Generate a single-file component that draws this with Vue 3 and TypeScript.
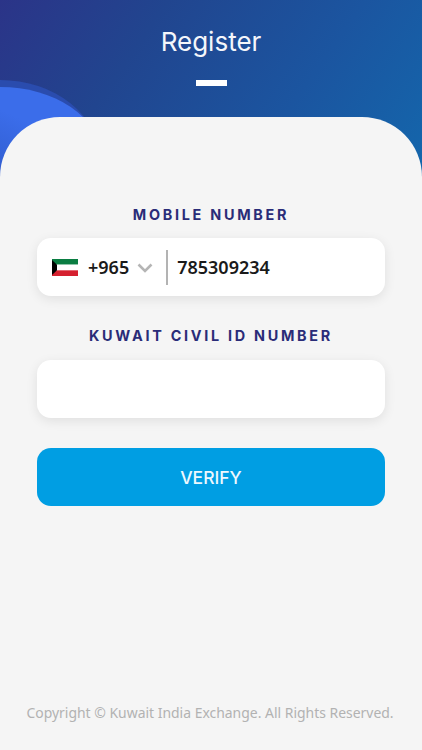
<script setup lang="ts">
const title: string = 'Register'
</script>

<template>
  <div class="page">
    <header class="header">
      <span class="blob blob-back"></span>
      <span class="blob blob-front"></span>
      <h1 class="title">{{ title }}</h1>
      <span class="dash"></span>
    </header>
    <main class="card">
      <div class="form">
        <label class="label">MOBILE NUMBER</label>
        <div class="field phone">
          <svg class="flag" viewBox="0 0 26 17" width="26" height="17">
            <rect width="26" height="5.67" fill="#0a7d42" />
            <rect y="5.67" width="26" height="5.67" fill="#fff" />
            <rect y="11.33" width="26" height="5.67" fill="#d5202f" />
            <polygon points="0,1 5,5.67 5,11.33 0,16" fill="#000" />
          </svg>
          <span class="code">+965</span>
          <svg class="chev" viewBox="0 0 16 10" width="16" height="10">
            <path d="M1.5 1.5 L8 8 L14.5 1.5" fill="none" stroke="#b5b5b5" stroke-width="2.6" />
          </svg>
          <span class="sep"></span>
          <span class="num">785309234</span>
        </div>
        <label class="label second">KUWAIT CIVIL ID NUMBER</label>
        <div class="field"></div>
        <button class="verify" type="button">VERIFY</button>
      </div>
      <footer class="copy">Copyright © Kuwait India Exchange. All Rights Reserved.</footer>
    </main>
  </div>
</template>

<style>
html, body { margin: 0; padding: 0; background: #f5f5f5; }
</style>

<style scoped>
.page {
  width: 422px;
  height: 750px;
  position: relative;
  overflow: hidden;
  background: linear-gradient(125deg, #2b3488 0%, #21458f 30%, #1b55a0 65%, #1368ad 100%) top / 100% 200px no-repeat, #f5f5f5;
  font-family: "Open Sans", sans-serif;
}
.header {
  height: 117px;
  display: flex;
  flex-direction: column;
  align-items: center;
  position: relative;
}
.blob { position: absolute; border-radius: 50%; }
.blob-back {
  left: -100px; top: 80px; width: 200px; height: 160px;
  background: #2a4cae;
}
.blob-front {
  left: -100px; top: 87px; width: 200px; height: 136px;
  background: linear-gradient(205deg, #3b6dea 30%, #3462d8 50%, #2a50b8 75%);
}
.title {
  margin: 26px 0 0;
  font-size: 26px;
  line-height: 32px;
  font-weight: 400;
  font-family: Inter, sans-serif;
  color: #f4f6fb;
  position: relative;
}
.dash {
  width: 31px; height: 6px; margin-top: 22px;
  background: #fff;
  position: relative;
}
.card {
  position: relative;
  height: 633px;
  background: #f5f5f5;
  border-radius: 60px 60px 0 0;
  display: flex;
  flex-direction: column;
  align-items: center;
}
.form {
  width: 348px;
  padding-top: 89px;
  display: flex;
  flex-direction: column;
  align-items: stretch;
}
.label {
  text-align: center;
  font-family: Inter, sans-serif;
  font-weight: 700;
  font-size: 14.4px;
  line-height: 18px;
  letter-spacing: 2.72px;
  color: #2a2c78;
  margin-bottom: 14px;
}
.second { margin-top: 31px; margin-bottom: 15px; }
.field {
  height: 58px;
  background: #fff;
  border-radius: 14px;
  box-shadow: 0 3px 12px rgba(0, 0, 0, 0.09);
}
.phone {
  display: flex;
  align-items: center;
  padding-left: 15px;
}
.flag { flex: none; }
.code {
  margin-left: 10px;
  font-size: 18px;
  font-weight: 600;
  color: #1a1a1a;
  font-family: "Noto Sans", sans-serif;
}
.chev { margin-left: 8px; flex: none; margin-top: 2px; }
.sep {
  width: 1.5px; height: 35px;
  background: #b3b3b3;
  margin-left: 13px;
}
.num {
  margin-left: 9.5px;
  font-size: 18px;
  font-weight: 600;
  color: #1a1a1a;
  font-family: "Noto Sans", sans-serif;
}
.verify {
  margin-top: 30px;
  height: 58px;
  border: 0;
  border-radius: 14px;
  background: #009ee3;
  color: #eef8fe;
  font-family: Inter, sans-serif;
  font-size: 17.5px;
  font-weight: 500;
}
.copy {
  position: absolute;
  left: 0; right: 0; top: 586px;
  padding-right: 2px;
  text-align: center;
  font-family: "Noto Sans", sans-serif;
  font-size: 13.95px;
  line-height: 20px;
  color: #b2b2b2;
}
</style>
